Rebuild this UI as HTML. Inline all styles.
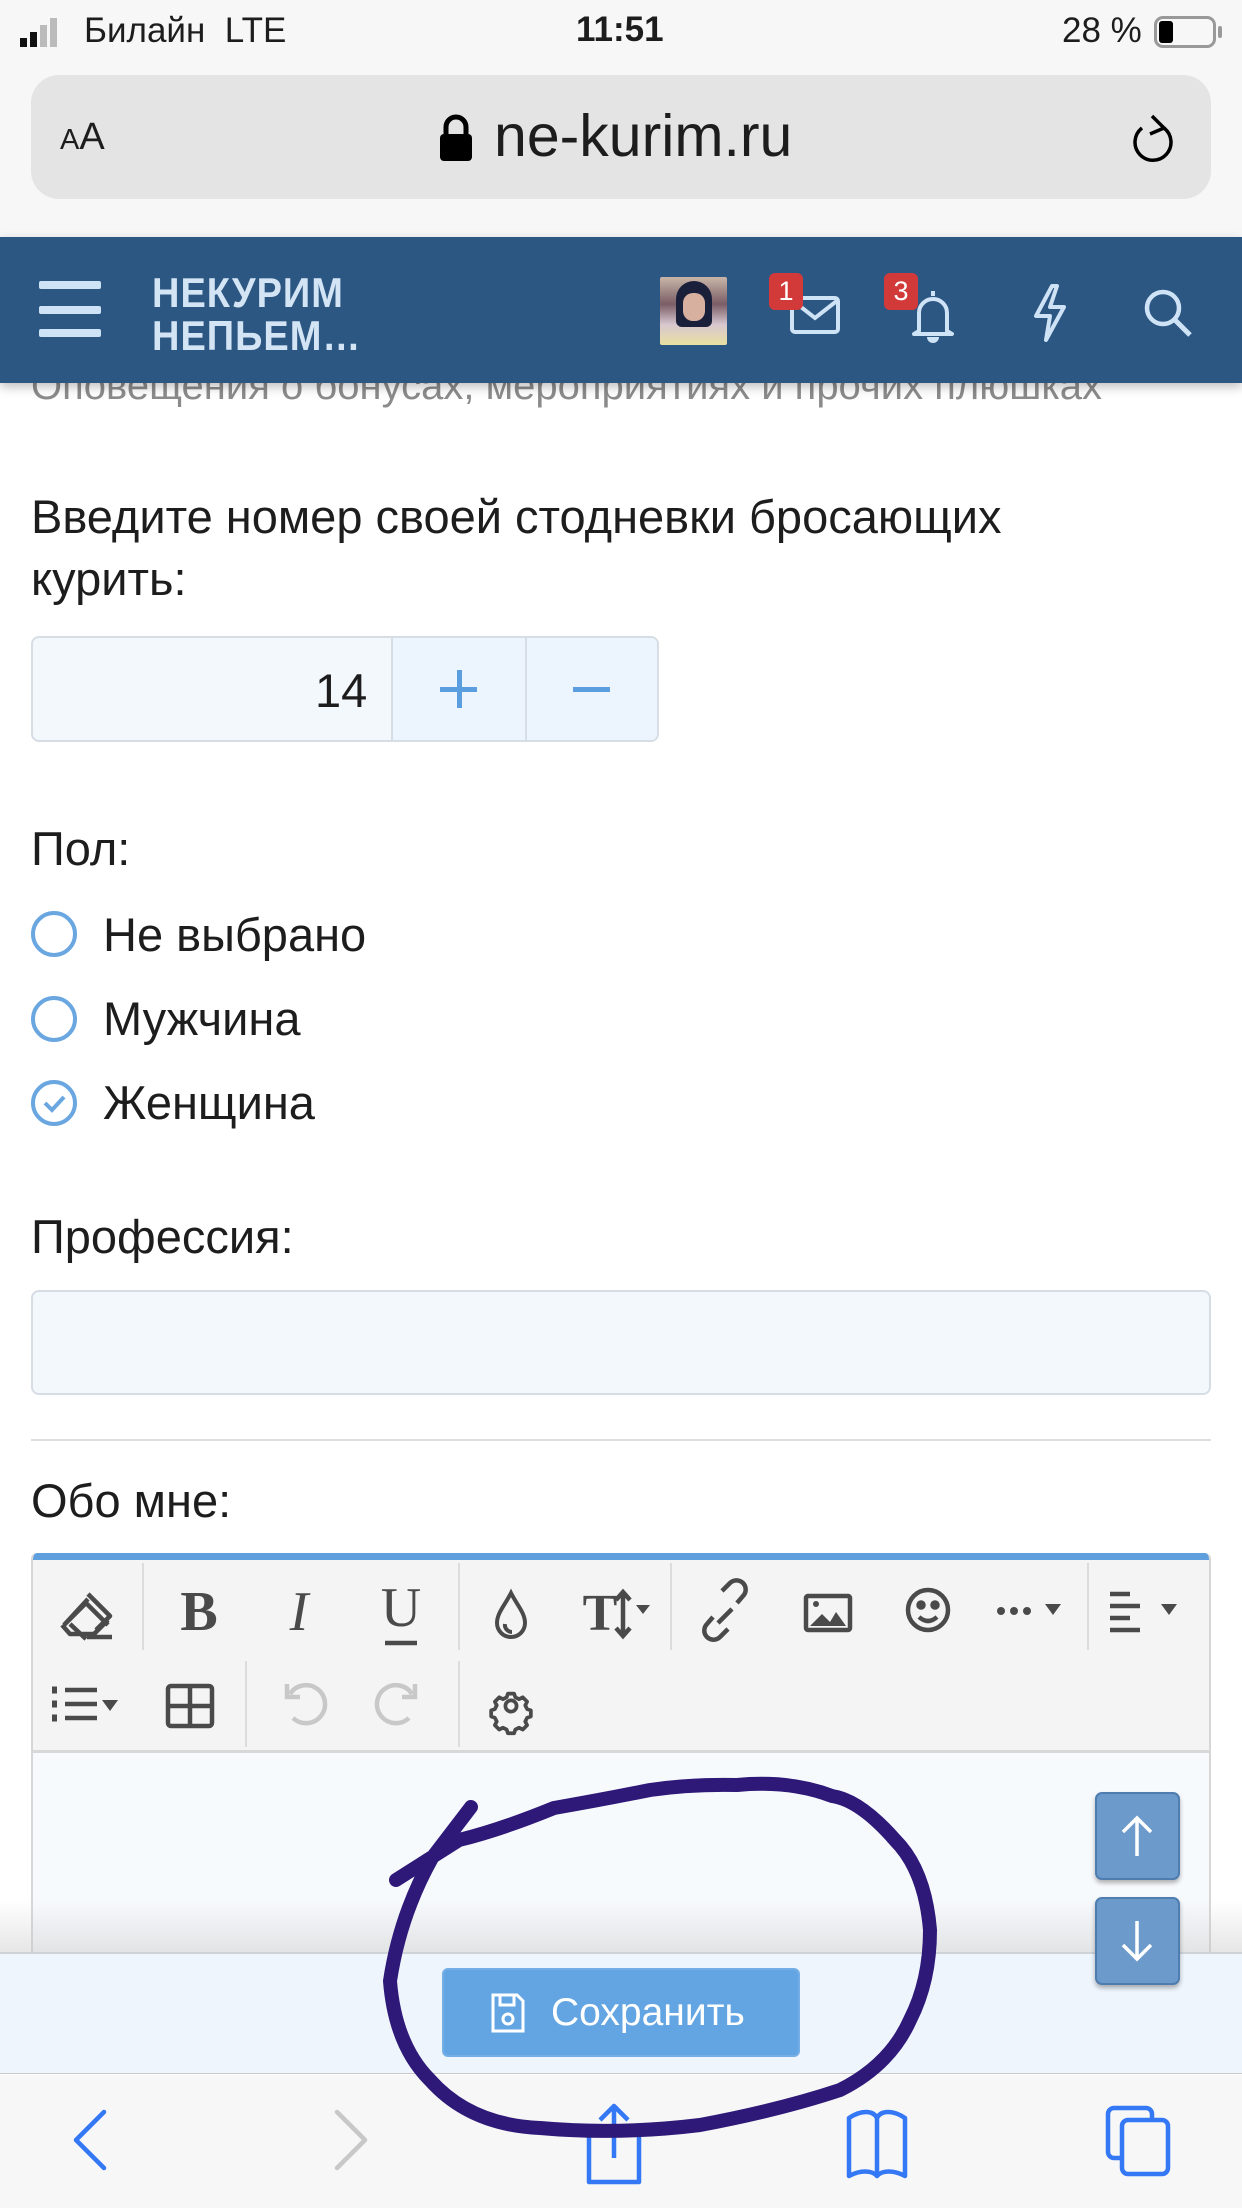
<!DOCTYPE html>
<html><head><meta charset="utf-8">
<style>
*{margin:0;padding:0;box-sizing:border-box}
body{width:1242px;height:2208px;position:relative;overflow:hidden;background:#fff;font-family:"Liberation Sans","Noto Sans CJK SC",sans-serif;color:#1d1d1d}
.a{position:absolute}
.t{position:absolute;font-size:47px;line-height:1;white-space:nowrap}
.sep{position:absolute;width:2px;background:#dcdcdc}
.ic{position:absolute}
</style></head><body>
<!-- status bar & url -->
<div class="a" style="left:0;top:0;width:1242px;height:237px;background:#f7f7f7"></div>
<div class="a" style="left:20px;top:38px;width:7px;height:9px;background:#111"></div>
<div class="a" style="left:30px;top:32px;width:7px;height:15px;background:#111"></div>
<div class="a" style="left:40px;top:25px;width:7px;height:22px;background:#bbb"></div>
<div class="a" style="left:50px;top:18px;width:7px;height:29px;background:#bbb"></div>
<div class="t" style="left:84px;top:13px;font-size:35px">Билайн&nbsp; LTE</div>
<div class="t" style="left:576px;top:12px;font-size:35px;font-weight:bold">11:51</div>
<div class="t" style="left:1062px;top:13px;font-size:35px">28 %</div>
<div class="a" style="left:1154px;top:16px;width:62px;height:32px;border:3px solid #999;border-radius:9px"></div>
<div class="a" style="left:1159px;top:21px;width:14px;height:22px;background:#000;border-radius:3px"></div>
<div class="a" style="left:1218px;top:26px;width:4px;height:12px;background:#999;border-radius:2px"></div>
<div class="a" style="left:31px;top:75px;width:1180px;height:124px;background:#e4e4e4;border-radius:28px"></div>
<div class="t" style="left:60px;top:118px;font-size:38px"><span style="font-size:29px">A</span>A</div>
<svg class="ic" style="left:438px;top:113px" width="36" height="50" viewBox="0 0 36 50"><path d="M8 22V14a10 10 0 0 1 20 0v8" fill="none" stroke="#000" stroke-width="5"/><rect x="2" y="21" width="32" height="27" rx="4" fill="#000"/></svg>
<div class="t" style="left:494px;top:107px;font-size:59px">ne-kurim.ru</div>
<svg class="ic" style="left:1128px;top:112px" width="50" height="56" viewBox="0 0 50 56"><path d="M36 16A18 18 0 1 1 14 16" fill="none" stroke="#000" stroke-width="3.5"/><path d="M24 4l12 12-14 6" fill="none" stroke="#000" stroke-width="3.5"/></svg>
<!-- header -->
<div class="a" style="left:0;top:237px;width:1242px;height:146px;background:#2d5783;z-index:3;box-shadow:0 4px 10px rgba(0,0,0,.25)">
 <div class="a" style="left:39px;top:44px;width:62px;height:8px;background:#cfe3f6;border-radius:2px"></div>
 <div class="a" style="left:39px;top:69px;width:62px;height:8px;background:#cfe3f6;border-radius:2px"></div>
 <div class="a" style="left:39px;top:92px;width:62px;height:8px;background:#cfe3f6;border-radius:2px"></div>
 <div class="t" style="left:152px;top:36px;font-size:38px;font-weight:bold;color:#d3e4f4;letter-spacing:1px;line-height:39px;transform:scaleY(1.1);transform-origin:top left">НЕКУРИМ<br>НЕПЬЕМ…</div>
 <div class="a" style="left:660px;top:40px;width:67px;height:68px;background:linear-gradient(180deg,#c9b6a8,#7a5d66 40%,#d8c7cf 70%,#e9e0a2);border-radius:2px"></div>
 <div class="a" style="left:676px;top:44px;width:36px;height:46px;background:#1a1f3a;border-radius:18px 18px 6px 6px"></div>
 <div class="a" style="left:683px;top:56px;width:22px;height:28px;background:#d7b0a0;border-radius:10px"></div>
 <svg class="ic" style="left:789px;top:58px" width="52" height="40" viewBox="0 0 52 40"><rect x="3" y="3" width="46" height="34" rx="3" fill="none" stroke="#cfe3f6" stroke-width="4"/><path d="M3 5l23 18 23-18" fill="none" stroke="#cfe3f6" stroke-width="4"/></svg>
 <div class="a" style="left:769px;top:36px;width:34px;height:37px;background:#d23a3a;border-radius:6px;color:#fff;font-size:27px;text-align:center;line-height:37px">1</div>
 <svg class="ic" style="left:910px;top:50px" width="46" height="58" viewBox="0 0 46 58"><path d="M23 4v5M9 44V26a14 14 0 0 1 28 0v18l5 3H4z" fill="none" stroke="#cfe3f6" stroke-width="4" stroke-linejoin="round"/><path d="M17 50a6 6 0 0 0 12 0" fill="#cfe3f6"/></svg>
 <div class="a" style="left:884px;top:36px;width:34px;height:37px;background:#d23a3a;border-radius:6px;color:#fff;font-size:27px;text-align:center;line-height:37px">3</div>
 <svg class="ic" style="left:1030px;top:46px" width="40" height="60" viewBox="0 0 40 60"><path d="M22 3L6 33h14l-4 24L34 24H20L27 3z" fill="none" stroke="#cfe3f6" stroke-width="4" stroke-linejoin="round"/></svg>
 <svg class="ic" style="left:1142px;top:50px" width="52" height="52" viewBox="0 0 52 52"><circle cx="21" cy="21" r="16" fill="none" stroke="#cfe3f6" stroke-width="4.5"/><path d="M33 33l15 15" stroke="#cfe3f6" stroke-width="5"/></svg>
</div>
<div class="t" style="left:31px;top:366px;font-size:40px;color:#8b8b8b">Оповещения о бонусах, мероприятиях и прочих плюшках</div>
<!-- form -->
<div class="t" style="left:31px;top:493px">Введите номер своей стодневки бросающих</div>
<div class="t" style="left:31px;top:555px">курить:</div>
<div class="a" style="left:31px;top:636px;width:628px;height:106px;border:2px solid #d6dde4;border-radius:8px;background:#f3f8fd;overflow:hidden">
 <div class="a" style="left:358px;top:0;width:134px;height:102px;background:#ecf4fd;border-left:2px solid #d6dde4"></div>
 <div class="a" style="left:492px;top:0;width:134px;height:102px;background:#ecf4fd;border-left:2px solid #d6dde4"></div>
 <div class="t" style="left:282px;top:29px">14</div>
 <div class="a" style="left:407px;top:49px;width:37px;height:5px;background:#5b9ee0"></div>
 <div class="a" style="left:424px;top:32px;width:5px;height:38px;background:#5b9ee0"></div>
 <div class="a" style="left:540px;top:49px;width:37px;height:5px;background:#5b9ee0"></div>
</div>
<div class="t" style="left:31px;top:825px">Пол:</div>
<div class="a" style="left:31px;top:911px;width:46px;height:46px;border:4px solid #6aa6e0;border-radius:50%"></div>
<div class="t" style="left:103px;top:911px">Не выбрано</div>
<div class="a" style="left:31px;top:996px;width:46px;height:46px;border:4px solid #6aa6e0;border-radius:50%"></div>
<div class="t" style="left:103px;top:995px">Мужчина</div>
<div class="a" style="left:31px;top:1080px;width:46px;height:46px;border:4px solid #6aa6e0;border-radius:50%"></div>
<svg class="ic" style="left:31px;top:1080px" width="46" height="46" viewBox="0 0 46 46"><path d="M14 23l7 7 12-13" fill="none" stroke="#6aa6e0" stroke-width="4"/></svg>
<div class="t" style="left:103px;top:1079px">Женщина</div>
<div class="t" style="left:31px;top:1213px">Профессия:</div>
<div class="a" style="left:31px;top:1290px;width:1180px;height:105px;border:2px solid #d6dde4;border-radius:8px;background:#f3f8fd"></div>
<div class="a" style="left:31px;top:1439px;width:1180px;height:2px;background:#dedede"></div>
<div class="t" style="left:31px;top:1477px">Обо мне:</div>
<!-- editor -->
<div class="a" style="left:31px;top:1553px;width:1180px;height:420px;border:2px solid #d6d6d6;border-top:none;background:#f7fafd;border-radius:6px 6px 0 0;overflow:hidden">
 <div class="a" style="left:-2px;top:0;width:1184px;height:7px;background:#5f9fdd"></div>
 <div class="a" style="left:0;top:7px;width:1180px;height:193px;background:#f4f4f4;border-bottom:3px solid #d8d8d8"></div>
</div>
<div class="sep" style="left:142px;top:1563px;height:87px"></div>
<div class="sep" style="left:458px;top:1563px;height:87px"></div>
<div class="sep" style="left:670px;top:1563px;height:87px"></div>
<div class="sep" style="left:1087px;top:1563px;height:87px"></div>
<div class="sep" style="left:245px;top:1661px;height:86px"></div>
<div class="sep" style="left:458px;top:1661px;height:86px"></div>
<svg class="ic" style="left:0;top:1570px" width="1242" height="180" viewBox="0 1570 1242 180" fill="none" stroke="#4a4a4a" stroke-width="4.5">
 <path d="M64 1625l22-22 22 22 M64 1625l24-26 M62 1625l8 9h24l14-14 M70 1624l16 15 M88 1594l22 22-14 14 M87 1637h25" stroke-linejoin="round"/>
 <text x="199" y="1630" font-family="Liberation Serif" font-size="56" fill="#4a4a4a" stroke="none" text-anchor="middle" font-weight="bold">B</text>
 <text x="299" y="1630" font-family="Liberation Serif" font-size="56" fill="#4a4a4a" stroke="none" text-anchor="middle" font-style="italic">I</text>
 <text x="401" y="1626" font-family="Liberation Serif" font-size="56" fill="#4a4a4a" stroke="none" text-anchor="middle">U</text>
 <path d="M385 1643h32"/>
 <path d="M511 1593c-6 12-14 20-14 30a14 14 0 0 0 28 0c0-10-8-18-14-30z M505 1624a7 7 0 0 0 7 8" stroke-width="4"/>
 <text x="600" y="1630" font-family="Liberation Serif" font-size="52" fill="#4a4a4a" stroke="none" text-anchor="middle" font-weight="bold">T</text>
 <path d="M623 1594v40 M616 1600l7-8 7 8 M616 1628l7 8 7-8"/>
 <path d="M636 1605h14l-7 9z" fill="#4a4a4a" stroke="none"/>
 <path d="M713 1617l-6 7a9 9 0 0 0 13 13l8-8 M737 1603l6-7a9 9 0 0 0-13-13l-8 8 M718 1623l14-14"/>
 <rect x="806" y="1596" width="44" height="34" rx="2"/><path d="M810 1626l12-12 8 8 6-10 10 14z" fill="#4a4a4a" stroke="none"/><circle cx="816" cy="1604" r="3" fill="#4a4a4a" stroke="none"/>
 <circle cx="928" cy="1610" r="20"/><circle cx="921" cy="1605" r="2.5" fill="#4a4a4a"/><circle cx="935" cy="1605" r="2.5" fill="#4a4a4a"/><path d="M919 1617q9 8 18 0"/>
 <circle cx="1001" cy="1611" r="4" fill="#4a4a4a" stroke="none"/><circle cx="1014" cy="1611" r="4" fill="#4a4a4a" stroke="none"/><circle cx="1027" cy="1611" r="4" fill="#4a4a4a" stroke="none"/>
 <path d="M1045 1604h16l-8 11z M1161 1604h16l-8 11z M102 1700h16l-8 11z" fill="#4a4a4a" stroke="none"/>
 <path d="M1110 1594h20 M1110 1606h30 M1110 1618h20 M1110 1630h30"/>
 <path d="M52 1690h5 M52 1704h5 M52 1718h5" stroke-width="7"/><path d="M65 1690h32 M65 1704h32 M65 1718h32"/>
 <rect x="168" y="1686" width="44" height="40" rx="3"/><path d="M190 1686v40 M168 1706h44"/>
 <path d="M287 1684v13h13 M290 1694a19 19 0 1 1 3 24" stroke="#c8c8c8"/>
 <path d="M415 1684v13h-13 M412 1694a19 19 0 1 0-3 24" stroke="#c8c8c8"/>
 <g transform="translate(511,1706) scale(0.62) translate(-511,-1702)">
 <circle cx="511" cy="1702" r="9" stroke-width="6"/>
 <path d="M506 1682h10l2 6 6 3 6-3 7 7-3 6 3 6 6 2v10l-6 2-3 6 3 6-7 7-6-3-6 3-2 6h-10l-2-6-6-3-6 3-7-7 3-6-3-6-6-2v-10l6-2 3-6-3-6 7-7 6 3 6-3z" stroke-width="6" stroke-linejoin="round"/>
 </g>
</svg>
<!-- scroll buttons -->
<div class="a" style="left:1095px;top:1792px;width:85px;height:88px;background:#6b9acb;border:2px solid #4f7db0;border-radius:7px;box-shadow:0 3px 5px rgba(0,0,0,.3)"></div>
<svg class="ic" style="left:1115px;top:1812px" width="44" height="48" viewBox="0 0 44 48"><path d="M22 44V6 M8 20L22 6l14 14" fill="none" stroke="#fff" stroke-width="3.5"/></svg>
<div class="a" style="left:1095px;top:1897px;width:85px;height:88px;background:#6b9acb;border:2px solid #4f7db0;border-radius:7px;box-shadow:0 3px 5px rgba(0,0,0,.3);z-index:2"></div>
<svg class="ic" style="left:1115px;top:1917px;z-index:2" width="44" height="48" viewBox="0 0 44 48"><path d="M22 4v38 M8 28l14 14 14-14" fill="none" stroke="#fff" stroke-width="3.5"/></svg>
<!-- save bar -->
<div class="a" style="left:0;top:1900px;width:1242px;height:52px;background:linear-gradient(rgba(200,200,200,0),rgba(200,200,200,.45))"></div>
<div class="a" style="left:0;top:1952px;width:1242px;height:122px;background:#eef5fd;border-top:2px solid #cfd3d8;border-bottom:1px solid #c8c8c8"></div>
<div class="a" style="left:442px;top:1968px;width:358px;height:89px;background:#63a5e2;border:2px solid #73afe6;border-radius:6px"></div>
<svg class="ic" style="left:490px;top:1992px" width="36" height="42" viewBox="0 0 36 42"><path d="M3 3h24l6 6v30H3z M10 3v10h14V3" fill="none" stroke="#fff" stroke-width="3"/><circle cx="18" cy="27" r="5" fill="none" stroke="#fff" stroke-width="3"/></svg>
<div class="t" style="left:551px;top:1993px;font-size:39px;color:#fff">Сохранить</div>
<!-- safari toolbar -->
<div class="a" style="left:0;top:2075px;width:1242px;height:133px;background:#f7f7f7"></div>
<svg class="ic" style="left:0;top:2075px" width="1242" height="133" viewBox="0 2075 1242 133" fill="none" stroke="#3478f6" stroke-width="4.5" stroke-linejoin="round">
 <path d="M104 2112l-28 28 28 28" stroke-linecap="round"/>
 <path d="M337 2112l28 28-28 28" stroke="#c8c8c8" stroke-linecap="round"/>
 <path d="M614 2158v-52 M600 2120l14-14 14 14 M600 2132h-11v50h50v-50h-11"/>
 <path d="M849 2118c12-8 24-8 28 0v58c-5-6-17-6-28 0z M905 2118c-12-8-24-8-28 0v58c5-6 17-6 28 0z M849 2118v58 M905 2118v58"/>
 <rect x="1108" y="2108" width="44" height="50" rx="6"/><rect x="1122" y="2120" width="46" height="54" rx="6" fill="#f7f7f7"/>
</svg>
<!-- annotation -->
<svg class="ic" style="left:0;top:0;z-index:5" width="1242" height="2208" viewBox="0 0 1242 2208"><path d="M471 1807 L432 1858 Q400 1915 390 1981 Q395 2045 430 2080 Q470 2125 540 2128 Q618 2135 700 2125 Q780 2110 840 2090 Q890 2065 910 2020 Q930 1981 930 1930 Q925 1870 895 1840 Q860 1800 832 1796 Q790 1780 737 1785 Q690 1784 650 1790 Q600 1800 554 1808 Q500 1830 459 1840 L396 1880" fill="none" stroke="#2e1878" stroke-width="14" stroke-linecap="round" stroke-linejoin="round"/></svg>
</body></html>
